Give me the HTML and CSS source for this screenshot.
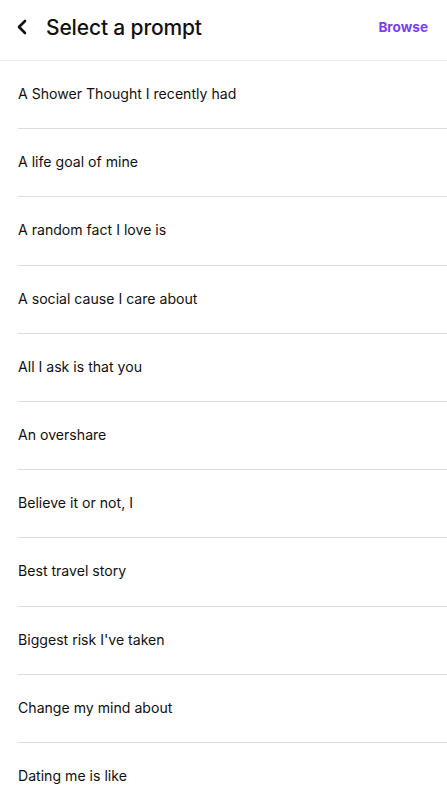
FILE: index.html
```html
<!DOCTYPE html>
<html lang="en">
<head>
<meta charset="utf-8">
<title>Select a prompt</title>
<link rel="stylesheet" href="styles.css">
</head>
<body>
<header class="topbar">
  <button class="back" aria-label="Back">
    <svg width="12" height="16" viewBox="0 0 12 16"><path d="M9 2 L3 8 L9 14" fill="none" stroke="#111" stroke-width="2.6" stroke-linecap="round" stroke-linejoin="round"/></svg>
  </button>
  <h1 class="title">Select a prompt</h1>
  <a class="browse" href="#">Browse</a>
</header>
<ul class="list">
  <li class="item">A Shower Thought I recently had</li>
  <li class="item">A life goal of mine</li>
  <li class="item">A random fact I love is</li>
  <li class="item">A social cause I care about</li>
  <li class="item">All I ask is that you</li>
  <li class="item">An overshare</li>
  <li class="item">Believe it or not, I</li>
  <li class="item">Best travel story</li>
  <li class="item">Biggest risk I've taken</li>
  <li class="item">Change my mind about</li>
  <li class="item">Dating me is like</li>
</ul>
</body>
</html>
```
FILE: styles.css
```css
* { box-sizing: border-box; }
html, body { margin: 0; padding: 0; background: #fff; }
body {
  font-family: "Inter", "Noto Sans", sans-serif;
  color: #111;
  width: 447px;
  overflow: hidden;
}
.topbar {
  height: 61px;
  display: flex;
  align-items: center;
  padding: 0 19px 6px 16px;
  border-bottom: 1px solid #ececec;
}
.back {
  border: 0;
  background: none;
  padding: 0;
  width: 14px;
  height: 18px;
  display: flex;
  align-items: center;
}
.title {
  margin: 0 0 0 16px;
  font-size: 21px;
  font-weight: 500;
  letter-spacing: -0.15px;
  flex: 1;
}
.browse {
  color: #7b3ff0;
  font-weight: 700;
  font-size: 13.6px;
  text-decoration: none;
}
.list {
  list-style: none;
  margin: 0;
  padding: 0 0 0 18px;
}
.item {
  height: 68.2px;
  display: flex;
  align-items: center;
  font-size: 14.1px;
  border-bottom: 1px solid #dedede;
  padding-bottom: 2px;
}
```
